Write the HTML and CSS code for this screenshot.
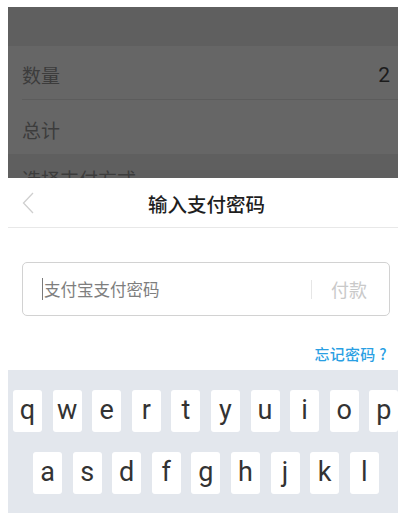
FILE: index.html
```html
<!DOCTYPE html>
<html lang="zh">
<head>
<meta charset="utf-8">
<link rel="stylesheet" href="styles.css">
</head>
<body>
<div class="screen">
  <div class="dim">
    <div class="dim-top"></div>
    <div class="dim-row line"><span class="label">数量</span><span class="value">2</span></div>
    <div class="dim-row"><span class="label">总计</span></div>
    <div class="dim-section"><span class="label">选择支付方式</span></div>
  </div>
  <div class="sheet">
    <div class="sheet-head">
      <svg class="back" width="12" height="22" viewBox="0 0 12 22"><path d="M11 1 L1.5 11 L11 21" fill="none" stroke="#cfcfcf" stroke-width="1.3"/></svg>
      <div class="title">输入支付密码</div>
    </div>
    <div class="body">
      <div class="pwbox">
        <span class="caret"></span>
        <span class="placeholder">支付宝支付密码</span>
        <span class="sep"></span>
        <span class="pay">付款</span>
      </div>
      <div class="forgot">忘记密码 ?</div>
    </div>
  </div>
  <div class="keyboard">
    <div class="krow r1">
      <div class="key">q</div><div class="key">w</div><div class="key">e</div><div class="key">r</div><div class="key">t</div><div class="key">y</div><div class="key">u</div><div class="key">i</div><div class="key">o</div><div class="key">p</div>
    </div>
    <div class="krow r2">
      <div class="key">a</div><div class="key">s</div><div class="key">d</div><div class="key">f</div><div class="key">g</div><div class="key">h</div><div class="key">j</div><div class="key">k</div><div class="key">l</div>
    </div>
  </div>
</div>
</body>
</html>
```

FILE: styles.css
```css
html, body {
  overflow: hidden;
}
body {
  margin: 7px 0 0 8px;
  background: #fff;
  font-family: "Noto Sans CJK SC", "Noto Sans", sans-serif;
  width: 390px;
  height: 506px;
}
.screen {
  width: 397px;
  display: flex;
  flex-direction: column;
}
.dim {
  background: #666;
  height: 171px;
  overflow: hidden;
  display: flex;
  flex-direction: column;
}
.dim-top {
  height: 39px;
  background: #5f5f5f;
  flex: none;
}
.dim-row {
  height: 54px;
  flex: none;
  display: flex;
  align-items: center;
  justify-content: space-between;
  padding: 4px 15px 0 14px;
  box-sizing: border-box;
}
.dim-row.line {
  border-bottom: 1px solid #5c5c5c;
  margin-left: 14px;
  padding-left: 0;
}
.label {
  font-size: 19px;
  color: #3c3c3c;
  line-height: 1;
}
.value {
  font-family: Roboto, sans-serif;
  font-size: 21px;
  color: #1c1c1c;
}
.dim-section {
  flex: none;
  height: 40px;
  background: #5f5f5f;
  padding: 14px 14px 0;
  box-sizing: border-box;
}
.sheet {
  background: #fff;
  height: 192px;
  display: flex;
  flex-direction: column;
}
.sheet-head {
  height: 50px;
  border-bottom: 1px solid #e8e8e8;
  display: flex;
  align-items: center;
  justify-content: center;
  position: relative;
  box-sizing: border-box;
}
.back {
  position: absolute;
  left: 14px;
  top: 14px;
}
.title {
  font-size: 19.5px;
  font-weight: 500;
  color: #1e1e1e;
  line-height: 1;
  margin-top: 2px;
}
.body {
  padding: 34px 15px 0 14px;
}
.pwbox {
  height: 54px;
  border: 1px solid #d2d2d2;
  border-radius: 5px;
  box-sizing: border-box;
  display: flex;
  align-items: center;
  padding-left: 19px;
}
.caret {
  width: 1px;
  height: 22px;
  background: #7a7a7a;
  margin-right: 1px;
}
.placeholder {
  font-size: 16.5px;
  color: #7e7e7e;
  flex: 1;
  line-height: 1;
}
.sep {
  width: 1px;
  height: 19px;
  background: #e6e6e6;
  margin-right: 19px;
}
.pay {
  font-size: 18px;
  color: #c9c9c9;
  margin-right: 22px;
  line-height: 1;
}
.forgot {
  text-align: right;
  font-size: 15px;
  font-weight: 500;
  color: #2a9fe3;
  margin-top: 29px;
  margin-right: 3px;
  line-height: 18px;
  letter-spacing: 0.3px;
}
.keyboard {
  background: #e3e7ed;
  height: 150px;
  padding-top: 20px;
  box-sizing: border-box;
  display: flex;
  flex-direction: column;
  gap: 20px;
}
.krow {
  display: flex;
  gap: 10.6px;
}
.r1 { padding-left: 5px; }
.r2 { padding-left: 25px; }
.key {
  width: 29px;
  height: 42px;
  background: #fff;
  border-radius: 3px;
  display: flex;
  align-items: center;
  justify-content: center;
  font-family: Roboto, sans-serif;
  font-size: 27px;
  color: #333;
  flex: none;
  padding-bottom: 3px;
  box-sizing: border-box;
}
```
